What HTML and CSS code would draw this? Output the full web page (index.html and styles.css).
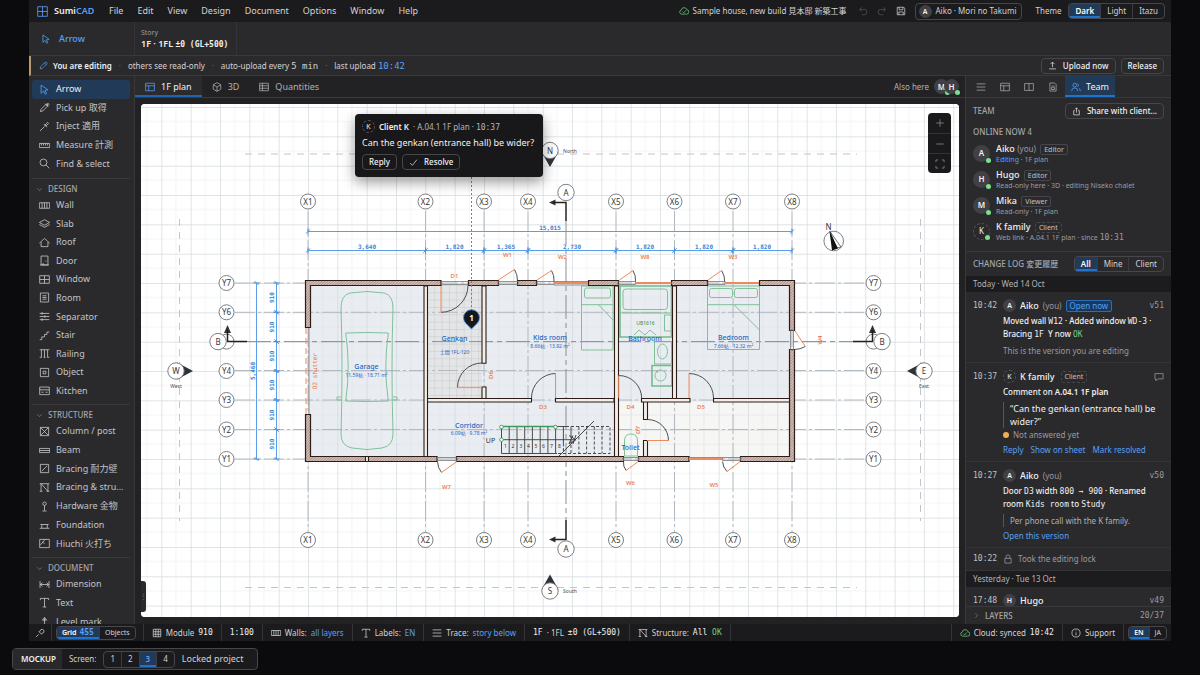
FILE: index.html
```html
<!DOCTYPE html>
<html lang="en">
<head>
<meta charset="utf-8">
<title>SumiCAD</title>
<link rel="stylesheet" href="styles.css">
</head>
<body>
<svg class="defs" aria-hidden="true">
  <symbol id="i-logo" viewBox="0 0 16 16"><path d="M1 1h14v14H1zM8 1v14M1 8h14"/></symbol>
  <symbol id="i-arrow" viewBox="0 0 16 16"><path d="M3 1.500l10 7-4.500.800 2.500 4.500-2 1-2.500-4.500L3 13.500z"/></symbol>
  <symbol id="i-pen" viewBox="0 0 16 16"><path d="M2 14l1-4 8-8q1.500-.500 2.500.500t.500 2.500l-8 8zM9.500 3.500l3 3"/></symbol>
  <symbol id="i-pick" viewBox="0 0 16 16"><path d="M2 14l1-3.500 7-7 2.500 2.500-7 7zM9 2.500l4.500 4.500M11.500 4.500l2-2"/><path class="solid" d="M10.500 3.500l2-2 2 2-2 2z"/></symbol>
  <symbol id="i-inject" viewBox="0 0 16 16"><path d="M1.500 14.500L8 8M7 4.500l4.500 4.500"/><path class="solid" d="M8.500 6l4-4 1.500 1.500-4 4z"/></symbol>
  <symbol id="i-measure" viewBox="0 0 16 16"><path d="M.500 5h15v6H.500zM3.500 5v3M6.500 5v3M9.500 5v3M12.500 5v3"/></symbol>
  <symbol id="i-find" viewBox="0 0 16 16"><circle cx="6.500" cy="6.500" r="5"/><path d="M10 10l5 5"/></symbol>
  <symbol id="i-chev" viewBox="0 0 16 16"><path d="M3 5.500l5 5 5-5"/></symbol>
  <symbol id="i-chevr" viewBox="0 0 16 16"><path d="M5.500 3l5 5-5 5"/></symbol>
  <symbol id="i-wall" viewBox="0 0 16 16"><path d="M.500 4h15v8H.500zM4.500 4v8M8 4v8M11.500 4v8"/></symbol>
  <symbol id="i-slab" viewBox="0 0 16 16"><path d="M8 2.500l7.500 4L8 10.500.500 6.500zM.500 9.500l7.500 4 7.500-4"/></symbol>
  <symbol id="i-roof" viewBox="0 0 16 16"><path d="M.500 9L8 2l7.500 7M3 7.500V14h10V7.500"/></symbol>
  <symbol id="i-door" viewBox="0 0 16 16"><path d="M3 1.500h10v13H3zM1.500 14.500h13M10 8v1.500M6 14.500v-3"/></symbol>
  <symbol id="i-window" viewBox="0 0 16 16"><path d="M1 2.500h14v11H1zM8 2.500v11M1 8h14"/></symbol>
  <symbol id="i-room" viewBox="0 0 16 16"><path d="M2 1.500h12v13H2zM5 5.500h6M5 8h6M5 10.500h6"/></symbol>
  <symbol id="i-sep" viewBox="0 0 16 16"><path d="M1 3.500h14M1 8h14M1 12.500h14M4.500 1.500v4M8.500 6v4M4.500 10.500v4"/></symbol>
  <symbol id="i-stair" viewBox="0 0 16 16"><path d="M1 14h3v-4h4V6.500h3.500V3H15"/></symbol>
  <symbol id="i-rail" viewBox="0 0 16 16"><path d="M1 2.500h14M1 13.500h3M6.500 13.500h3M12 13.500h3M3.500 2.500v11M8 2.500v11M12.500 2.500v11"/></symbol>
  <symbol id="i-object" viewBox="0 0 16 16"><path d="M2 2h12v12H2zM6 6h4v4H6z"/></symbol>
  <symbol id="i-kitchen" viewBox="0 0 16 16"><path d="M1 3h14v11H1zM1 7h14M3.500 10.500h3M9.500 10.500h3"/></symbol>
  <symbol id="i-column" viewBox="0 0 16 16"><path d="M2 2h12v12H2zM2 2l12 12M14 2L2 14"/></symbol>
  <symbol id="i-beam" viewBox="0 0 16 16"><path d="M.500 5h15v6H.500zM.500 8h15"/></symbol>
  <symbol id="i-brace" viewBox="0 0 16 16"><path d="M2 2h12v12H2zM4 12l8-8"/></symbol>
  <symbol id="i-brace2" viewBox="0 0 16 16"><path d="M3 2.500v11M13 2.500v11M1 2.500h14M1 13.500h4M11 13.500h4M3 2.500l10 11"/></symbol>
  <symbol id="i-hard" viewBox="0 0 16 16"><circle cx="8" cy="4" r="2.500"/><path d="M8 6.500V14M5 14.500h6"/></symbol>
  <symbol id="i-found" viewBox="0 0 16 16"><path d="M1 13.500h14M4 13.500V8M12 13.500V8M2 8h12"/></symbol>
  <symbol id="i-hiuchi" viewBox="0 0 16 16"><path d="M1 2h14v12H1zM2 10l7-8M5 6l3 2"/></symbol>
  <symbol id="i-dim" viewBox="0 0 16 16"><path d="M1.500 3v10M14.500 3v10M1.500 8h13M5 5.500L2 8l3 2.500M11 5.500L14 8l-3 2.500"/></symbol>
  <symbol id="i-text" viewBox="0 0 16 16"><path d="M2 4.500V2h12v2.500M8 2v12.500M5.500 14.500h5"/></symbol>
  <symbol id="i-level" viewBox="0 0 16 16"><path d="M8 15V3M5 6l3-4 3 4zM3 15h10"/></symbol>
  <symbol id="i-plan" viewBox="0 0 16 16"><path d="M1 2h14v12H1zM1 6h14M6 6v8"/></symbol>
  <symbol id="i-cube" viewBox="0 0 16 16"><path d="M8 1l6 3.500v7L8 15l-6-3.500v-7zM2 4.500L8 8l6-3.500M8 8v7"/></symbol>
  <symbol id="i-table" viewBox="0 0 16 16"><path d="M1 2h14v12H1zM1 6h14M1 10h14M5.500 2v12"/></symbol>
  <symbol id="i-cloud" viewBox="0 0 16 16"><path d="M4 13a3.300 3.300 0 0 1-.300-6.500 4.500 4.500 0 0 1 8.800-.500A3.500 3.500 0 0 1 12 13zM5.500 9l2 2 3.500-4"/></symbol>
  <symbol id="i-undo" viewBox="0 0 16 16"><path d="M6 2L2.500 5.500 6 9M2.500 5.500H10a4 4 0 0 1 0 8.500H6"/></symbol>
  <symbol id="i-redo" viewBox="0 0 16 16"><path d="M10 2l3.500 3.500L10 9M13.500 5.500H6A4 4 0 0 0 6 14h4"/></symbol>
  <symbol id="i-save" viewBox="0 0 16 16"><path d="M2 2h10.500L14 3.500V14H2zM5 2v4h6V2M4.500 14V9.500h7V14"/></symbol>
  <symbol id="i-upload" viewBox="0 0 16 16"><path d="M8 11V2M4.500 5.500L8 2l3.500 3.500M2 14h12"/></symbol>
  <symbol id="i-share" viewBox="0 0 16 16"><path d="M8 10V1.500M5.500 4L8 1.500 10.500 4M5 6.500H3V14h10V6.500h-2"/></symbol>
  <symbol id="i-menu" viewBox="0 0 16 16"><path d="M1 3h14M1 8h14M1 13h14"/></symbol>
  <symbol id="i-book" viewBox="0 0 16 16"><path d="M1 2.500h14v11H1zM8 2.500v11"/></symbol>
  <symbol id="i-doc" viewBox="0 0 16 16"><path d="M3 1.500h7.500L13 4v10.500H3zM5.500 6.500h5M5.500 9h5v3h-5z"/></symbol>
  <symbol id="i-team" viewBox="0 0 16 16"><circle cx="6" cy="5" r="3"/><path d="M1 14.500q0-5 5-5t5 5M10.500 2.500a3 3 0 0 1 0 5M12.500 10q2.500 1 2.500 4.500"/></symbol>
  <symbol id="i-chat" viewBox="0 0 16 16"><path d="M1.500 2.500h13V11H6l-3 3v-3H1.500z"/></symbol>
  <symbol id="i-lock" viewBox="0 0 16 16"><path d="M3 7h10v7.500H3zM5 7V4.500a3 3 0 0 1 6 0V7"/></symbol>
  <symbol id="i-info" viewBox="0 0 16 16"><circle cx="8" cy="8" r="6.500"/><path d="M8 7v5M8 4v1.200"/></symbol>
  <symbol id="i-pin" viewBox="0 0 16 16"><path d="M1.500 14.500L6 10M6 5.500l4.500 4.500M7 6.500l2.500-4q2.500-1 4 .500t.500 4l-4 2.500"/></symbol>
  <symbol id="i-check" viewBox="0 0 16 16"><path d="M2 9l4 4 8-10"/></symbol>
  <symbol id="i-grid" viewBox="0 0 16 16"><path d="M2 2h12v12H2zM6 2v12M10 2v12M2 6h12M2 10h12"/></symbol>
  <symbol id="i-plus" viewBox="0 0 16 16"><path d="M8 2v12M2 8h12"/></symbol>
  <symbol id="i-minus" viewBox="0 0 16 16"><path d="M2 8h12"/></symbol>
  <symbol id="i-fit" viewBox="0 0 16 16"><path d="M1.500 5V1.500H5M11 1.500h3.500V5M14.500 11v3.500H11M5 14.500H1.500V11"/></symbol>
</svg>

<div class="app">
  <header class="titlebar">
    <div class="brand"><svg class="icon blue"><use href="#i-logo"/></svg><strong>Sumi<span>CAD</span></strong></div>
    <nav class="menus">
      <button>File</button><button>Edit</button><button>View</button><button>Design</button><button>Document</button><button>Options</button><button>Window</button><button>Help</button>
    </nav>
    <div class="project"><svg class="icon green"><use href="#i-cloud"/></svg><span>Sample house, new build 見本邸 新築工事</span></div>
    <div class="quick">
      <button class="dim" aria-label="Undo"><svg class="icon"><use href="#i-undo"/></svg></button>
      <button class="dim" aria-label="Redo"><svg class="icon"><use href="#i-redo"/></svg></button>
      <button aria-label="Save"><svg class="icon"><use href="#i-save"/></svg></button>
    </div>
    <button class="btn account"><span class="avatar small">A</span>Aiko · Mori no Takumi</button>
    <span class="theme-label">Theme</span>
    <div class="seg theme"><button class="on">Dark</button><button>Light</button><button>Itazu</button></div>
  </header>

  <div class="optionbar">
    <div class="current"><svg class="icon blue"><use href="#i-arrow"/></svg>Arrow</div>
    <div class="story"><span>Story</span><b>1F · 1FL <code>±0 (GL+500)</code></b></div>
  </div>

  <div class="lockbar">
    <svg class="icon blue"><use href="#i-pen"/></svg>
    <strong>You are editing</strong><i>·</i><span>others see read-only</span><i>·</i><span>auto-upload every <code>5 min</code></span><i>·</i><span>last upload <code class="blue">10:42</code></span>
    <button class="btn push"><svg class="icon"><use href="#i-upload"/></svg>Upload now</button>
    <button class="btn">Release</button>
  </div>

  <main class="work">
    <aside class="tools">
      <div class="tool-list basic">
        <button class="on"><svg class="icon"><use href="#i-arrow"/></svg>Arrow</button>
        <button><svg class="icon"><use href="#i-pick"/></svg>Pick up 取得</button>
        <button><svg class="icon"><use href="#i-inject"/></svg>Inject 適用</button>
        <button><svg class="icon"><use href="#i-measure"/></svg>Measure 計測</button>
        <button><svg class="icon"><use href="#i-find"/></svg>Find &amp; select</button>
      </div>
      <h2><svg class="icon tiny"><use href="#i-chev"/></svg>DESIGN</h2>
      <div class="tool-list design">
        <button><svg class="icon"><use href="#i-wall"/></svg>Wall</button>
        <button><svg class="icon"><use href="#i-slab"/></svg>Slab</button>
        <button><svg class="icon"><use href="#i-roof"/></svg>Roof</button>
        <button><svg class="icon"><use href="#i-door"/></svg>Door</button>
        <button><svg class="icon"><use href="#i-window"/></svg>Window</button>
        <button><svg class="icon"><use href="#i-room"/></svg>Room</button>
        <button><svg class="icon"><use href="#i-sep"/></svg>Separator</button>
        <button><svg class="icon"><use href="#i-stair"/></svg>Stair</button>
        <button><svg class="icon"><use href="#i-rail"/></svg>Railing</button>
        <button><svg class="icon"><use href="#i-object"/></svg>Object</button>
        <button><svg class="icon"><use href="#i-kitchen"/></svg>Kitchen</button>
      </div>
      <h2><svg class="icon tiny"><use href="#i-chev"/></svg>STRUCTURE</h2>
      <div class="tool-list structure">
        <button><svg class="icon"><use href="#i-column"/></svg>Column / post</button>
        <button><svg class="icon"><use href="#i-beam"/></svg>Beam</button>
        <button><svg class="icon"><use href="#i-brace"/></svg>Bracing 耐力壁</button>
        <button><svg class="icon"><use href="#i-brace2"/></svg>Bracing &amp; stru...</button>
        <button><svg class="icon"><use href="#i-hard"/></svg>Hardware 金物</button>
        <button><svg class="icon"><use href="#i-found"/></svg>Foundation</button>
        <button><svg class="icon"><use href="#i-hiuchi"/></svg>Hiuchi 火打ち</button>
      </div>
      <h2><svg class="icon tiny"><use href="#i-chev"/></svg>DOCUMENT</h2>
      <div class="tool-list document">
        <button><svg class="icon"><use href="#i-dim"/></svg>Dimension</button>
        <button><svg class="icon"><use href="#i-text"/></svg>Text</button>
        <button><svg class="icon"><use href="#i-level"/></svg>Level mark</button>
      </div>
    </aside>

    <section class="stage">
      <div class="tabs">
        <button class="on"><svg class="icon blue"><use href="#i-plan"/></svg>1F plan</button>
        <button><svg class="icon"><use href="#i-cube"/></svg>3D</button>
        <button><svg class="icon"><use href="#i-table"/></svg>Quantities</button>
        <div class="here">Also here <span class="faces"><span class="avatar online">M</span><span class="avatar online">H</span></span></div>
      </div>
      <div class="canvas">
        <svg class="plan" viewBox="141 104 818 513" role="img" aria-label="First floor plan">
          <defs>
            <pattern id="grid" x="308" y="283" width="29.330" height="29.330" patternUnits="userSpaceOnUse">
              <path d="M14.660 0v29.330M0 14.660h29.330" stroke="#f0f1f3" stroke-width=".8"/>
              <path d="M0 0v29.330M0 0h29.330" stroke="#d3dade" stroke-width="1.400"/>
            </pattern>
            <pattern id="room" x="308" y="283" width="29.330" height="29.330" patternUnits="userSpaceOnUse">
              <path d="M14.660 0v29.330M0 14.660h29.330" stroke="#dfe3e8" stroke-width=".8"/>
              <path d="M0 0v29.330M0 0h29.330" stroke="#c9d1d8" stroke-width="1.400"/>
            </pattern>
            <pattern id="tile" x="427" y="285" width="7.330" height="7.330" patternUnits="userSpaceOnUse">
              <path d="M0 0v7.330M0 0h7.330" stroke="#c2c5c8" stroke-width=".9"/>
            </pattern>
            <pattern id="hatch" width="2" height="2" patternUnits="userSpaceOnUse" patternTransform="rotate(45)">
              <rect width="2" height="2" fill="#d9c4be"/><path d="M0 0v2" stroke="#94706a" stroke-width="1.200"/>
            </pattern>
            <marker id="tick" markerWidth="8" markerHeight="8" refX="4" refY="4" orient="auto" markerUnits="userSpaceOnUse"><path d="M2 6l4-4M4 1v6" stroke="#4f93e0" stroke-width="1"/></marker>
          </defs>
          <rect x="141" y="104" width="818" height="513" fill="#fff"/>
          <rect x="141" y="104" width="818" height="513" fill="url(#grid)"/>

          <g class="boundary"><path d="M245 154H857M245 587.500H857M179.500 219V521M920.500 219V521"/></g>

          <rect x="308" y="283" width="484" height="176" fill="#e9edf1"/>
          <rect x="619" y="400" width="171" height="57" fill="#f6f6f4"/>
          <rect x="308" y="283" width="484" height="176" fill="url(#room)" opacity=".8"/>
          <rect x="427" y="285" width="55" height="114" fill="#e4e5e6"/>
          <rect x="427" y="285" width="55" height="114" fill="url(#tile)"/>

          <g class="axis">
            <path d="M308 211V532M425.500 211V532M484 211V532M528 211V532M616 211V532M674.500 211V532M733 211V532M792 211V532"/>
            <path d="M235 283H866M235 312.300H866M235 370.500H866M235 400H866M235 429.500H866M235 459H866"/>
            <path class="section" d="M247 341.600H853M566 221V520"/>
          </g>

          <g class="dims">
            <path d="M308 231.500H792"/>
            <path d="M308 250.500H425.500"/><path d="M425.500 250.500H484"/><path d="M484 250.500H528"/><path d="M528 250.500H616"/><path d="M616 250.500H674.500"/><path d="M674.500 250.500H733"/><path d="M733 250.500H792"/>
            <path d="M256.500 283V459"/>
            <path d="M276.500 283V312.300"/><path d="M276.500 312.300V341.600"/><path d="M276.500 341.600V371"/><path d="M276.500 371V400"/><path d="M276.500 400V429.500"/><path d="M276.500 429.500V459"/>
          </g>
          <g class="dimtext">
            <text x="550" y="229.500">15,015</text>
            <text x="367" y="248.500">3,640</text><text x="454.500" y="248.500">1,820</text><text x="506" y="248.500">1,365</text><text x="572" y="248.500">2,730</text><text x="645" y="248.500">1,820</text><text x="704" y="248.500">1,820</text><text x="762" y="248.500">1,820</text>
            <text transform="translate(255 371) rotate(-90)">5,460</text>
            <text transform="translate(274 297.500) rotate(-90)">910</text><text transform="translate(274 327) rotate(-90)">910</text><text transform="translate(274 356) rotate(-90)">910</text><text transform="translate(274 385) rotate(-90)">910</text><text transform="translate(274 415) rotate(-90)">910</text><text transform="translate(274 444) rotate(-90)">910</text>
          </g>

          <g class="furniture">
            <path d="M341 308q0-13 9-15 17-3 34 0 9 2 9 15-2 60 0 126 0 12-11 14-15 3-30 0-11-2-11-14 2-66 0-126z"/>
            <path d="M345.700 333q21-1 42.600 0-5 34 0 68-21 1-42.600 0 5-34 0-68zM341 397h-4v3h4M393 397h4v3h-4"/>
            <path d="M581.500 286H613v64h-31.500zM581.500 304.700H613M598.500 304.700L613 320"/><rect x="584.500" y="288" width="26" height="10" rx="2"/>
            <path class="thick" d="M620 286h51.500v51H620z"/><path d="M622 313h48M664.500 315h7v16h-7zM634 335l5-5 6 5 5-5 6 5M654.500 341.500h17V364h-17zM624.500 456v-15q0-7 6.500-7t6.500 7v15z"/><rect x="623" y="289" width="44.500" height="20.500" rx="3"/>
            <ellipse cx="662.500" cy="351.500" rx="5" ry="7.500"/><path class="thick" d="M652 365.500h20V386h-20z"/><circle cx="660.500" cy="375.500" r="5.500"/><path d="M656 371l2 2"/>
            <path d="M707.500 286h52v63.500h-52zM707.500 304.700h52M734 304.700L759.500 330"/><rect x="709.500" y="288.500" width="23" height="9" rx="2"/><rect x="734.500" y="288.500" width="23" height="9" rx="2"/>
          </g>

          <g class="stairs">
            <path d="M501.500 426.500H566M501.500 453.500H557M501.500 426.500v27M509.200 426.500v27M517 426.500v27M524.700 426.500v27M532.400 426.500v27M540.200 426.500v27M547.900 426.500v27M555.600 426.500v27M563.400 426.500v20M571 426.500v12M557 458l37-37M501.500 439.700H575M569 435.500l7 4.200-7 4.200M573 435.500l-4 8M576 435l-3 9"/>
            <path stroke-dasharray="3 2" d="M566 426.500H610v27H557M563.400 448v6M571 440v13M578.900 426.500v27M586.600 426.500v27M594.300 426.500v27M602 426.500v27"/>
            <path class="rail" d="M501.500 426.500H556"/>
            <circle cx="501.500" cy="427" r="1.800"/><circle cx="555.500" cy="427" r="1.800"/><circle cx="501.500" cy="439.700" r="1.800"/>
          </g>
          <g class="steps"><text x="505.500" y="448">1</text><text x="513" y="448">2</text><text x="521" y="448">3</text><text x="528.500" y="448">4</text><text x="536" y="448">5</text><text x="543.500" y="448">6</text><text x="551.500" y="448">7</text><text x="559.500" y="448">8</text></g>

          <g class="walls">
            <path d="M305.500 280.500H441V285.500H310.500V327.500H305.500zM468.500 280.500H498.500V285.500H468.500zM517.500 280.500H536.500V285.500H517.500zM588.500 280.500H618.500V285.500H588.500zM671.500 280.500H707.500V285.500H671.500zM759.500 280.500H794.500V330.500H789.500V285.500H759.500zM789.500 349.500H794.500V461.500H740.500V456.500H789.500zM689 456.500V461.500H638.500V456.500zM623.500 456.500V461.500H456.500V456.500zM437 456.500V461.500H305.500V414.500H310.500V456.500z"/>
          </g>
          <g class="walls inner">
            <path d="M424 286h3.500v170.500H424zM482 286h4v77.300h-4zM482 387h4v11.500h-4zM427.500 398.500H531.500v3.500H427.500zM555.500 398.500H614v3.500h-58.500zM614.500 286h4v170.500h-4zM641.500 398.500H690v3.500h-48.500zM713.500 398.500H789.500v3.500h-76zM672.500 286h4v112.500h-4zM643.500 402h4v17.500h-4zM643.500 440.500h4v16h-4zM365.500 456.500h3v5h-3z"/>
          </g>
          <g class="frames"><path d="M441 281.500h27.500M441 284.500h27.500M498 281.500h20v3h-20zM537 281.500h17v3h-17zM554 281.500h34M554 285h34M618 281.500h17.500v3H618zM708 281.500h17v3h-17zM790.500 330v20h3v-20zM437 457.500h20v3h-20zM623.500 457.500h15v3h-15zM722.500 457.500h18v3h-18zM689 457.500h33.500M309 328v86"/></g>
          <g class="swing"><path d="M441 312.300A27 27 0 0 0 468 285.500M482 363a24.500 24.500 0 0 0-24.500 24.500M531.500 398a24.500 24.500 0 0 1 24-24.500M618.700 375.500a23 23 0 0 1 23 23M647.500 419.500a21 21 0 0 1 21 21M689 373.500a24.500 24.500 0 0 1 24.500 24.500M514.500 269.500q3 5 3 11M551.500 270.500q3 5 2.500 11M633 270.500q3 5 2.500 11M721.700 270.500q3 5 3 11M805.300 346.500q-5 3-11 3M441.500 472.500q-4-5-4-11M626 470.500q-3-4-2.500-9M727 471.500q-4-4-4.500-10"/></g>
          <g class="leaf"><path d="M441 286v26.500M457.500 387.300H482M555.500 373.500V398M618.700 375.500V398M647 440.500h21.500M689 373.500V398M498.300 280l16.200-10.500M537 280l14.500-9.500M619.500 280l13.500-9.500M708 280l13.700-9.500M795 331l10.300 15.500M456.700 461.700l-15.200 10.800M638 461.700l-12 8.800M740 461.700l-13 9.800"/><path class="sash" d="M554 283h34M635.500 283h36M725 283h34M689 459h33.500"/><path stroke-dasharray="6 4" d="M306 328v86"/></g>

          <g class="tag">
            <text x="454.500" y="277.500">D1</text><text x="507.500" y="257">W1</text><text x="562.500" y="259">W2</text><text x="645" y="259">W8</text><text x="733" y="259">W3</text><text x="543" y="409">D3</text><text x="630.500" y="409">D4</text><text x="701" y="409">D5</text><text x="446.500" y="489">W7</text><text x="630.500" y="484.500">W6</text><text x="714" y="487">W5</text>
            <text transform="translate(493 375) rotate(-90)">D6</text><text transform="translate(640 430) rotate(-90)">D7</text><text transform="translate(822 340) rotate(-90)">W4</text>
            <text class="shutter" transform="translate(317 371) rotate(-90)">D2 shutter</text>
          </g>
          <g class="rooms">
            <text x="366.500" y="369">Garage</text><text x="454.500" y="340.500">Genkan</text><text x="550" y="340">Kids room</text><text x="645" y="340.500">Bathroom</text><text x="733.500" y="340">Bedroom</text><text x="469" y="427.500">Corridor</text><text x="630.500" y="450">Toilet</text>
            <g class="area"><text x="366.500" y="376.500">11.59帖 · 18.71 m²</text><text class="mini" x="454.500" y="354">土間 1FL-120</text><text x="550" y="347.500">8.66帖 · 13.92 m²</text><text x="733.500" y="347.500">7.66帖 · 12.32 m²</text><text x="469" y="435">6.09帖 · 9.78 m²</text></g>
          </g>
          <text class="fix" x="645.500" y="324.500">UB1616</text>
          <text class="up" x="490.500" y="442.500">UP</text>

          <g class="bubbles">
            <circle cx="308" cy="201.500" r="7.500"/><circle cx="425.500" cy="201.500" r="7.500"/><circle cx="484" cy="201.500" r="7.500"/><circle cx="528" cy="201.500" r="7.500"/><circle cx="616" cy="201.500" r="7.500"/><circle cx="674.500" cy="201.500" r="7.500"/><circle cx="733" cy="201.500" r="7.500"/><circle cx="792" cy="201.500" r="7.500"/>
            <circle cx="308" cy="540" r="7.500"/><circle cx="425.500" cy="540" r="7.500"/><circle cx="484" cy="540" r="7.500"/><circle cx="528" cy="540" r="7.500"/><circle cx="616" cy="540" r="7.500"/><circle cx="674.500" cy="540" r="7.500"/><circle cx="733" cy="540" r="7.500"/><circle cx="792" cy="540" r="7.500"/>
            <circle cx="226.500" cy="283" r="7.500"/><circle cx="226.500" cy="312.300" r="7.500"/><circle cx="226.500" cy="341.600" r="7.500"/><circle cx="226.500" cy="371" r="7.500"/><circle cx="226.500" cy="400" r="7.500"/><circle cx="226.500" cy="429.500" r="7.500"/><circle cx="226.500" cy="459" r="7.500"/>
            <circle cx="873.500" cy="283" r="7.500"/><circle cx="873.500" cy="312.300" r="7.500"/><circle cx="873.500" cy="341.600" r="7.500"/><circle cx="873.500" cy="371" r="7.500"/><circle cx="873.500" cy="400" r="7.500"/><circle cx="873.500" cy="429.500" r="7.500"/><circle cx="873.500" cy="459" r="7.500"/>
            <text x="308" y="204.500">X1</text><text x="425.500" y="204.500">X2</text><text x="484" y="204.500">X3</text><text x="528" y="204.500">X4</text><text x="616" y="204.500">X5</text><text x="674.500" y="204.500">X6</text><text x="733" y="204.500">X7</text><text x="792" y="204.500">X8</text>
            <text x="308" y="543">X1</text><text x="425.500" y="543">X2</text><text x="484" y="543">X3</text><text x="528" y="543">X4</text><text x="616" y="543">X5</text><text x="674.500" y="543">X6</text><text x="733" y="543">X7</text><text x="792" y="543">X8</text>
            <text x="226.500" y="286">Y7</text><text x="226.500" y="315.300">Y6</text><text x="226.500" y="374">Y4</text><text x="226.500" y="403">Y3</text><text x="226.500" y="432.500">Y2</text><text x="226.500" y="462">Y1</text>
            <text x="873.500" y="286">Y7</text><text x="873.500" y="315.300">Y6</text><text x="873.500" y="374">Y4</text><text x="873.500" y="403">Y3</text><text x="873.500" y="432.500">Y2</text><text x="873.500" y="462">Y1</text>
            <g class="solidmarks">
              <path d="M541.500 152h17L550 167zM541.500 589.500h17L550 574.500zM177 362.500v17l16-8.500zM923 362.500v17L907 371z"/>
              <path d="M549 202.500l6.500-3v6zM549 539.500l6.500-3v6zM227.500 325l-3.500 8h7zM872.500 325l-3.500 8h7z"/>
            </g>
            <path class="cut" d="M553 202.500h13V221M566 520v19.500h-13M227.500 330v11.600H247M853 341.600h19.500V330"/>
            <circle cx="566" cy="192.500" r="8.200"/><circle cx="566" cy="549" r="8.200"/><circle cx="218" cy="341.600" r="8.200"/><circle cx="882" cy="341.600" r="8.200"/>
            <circle cx="550" cy="150.500" r="8.200"/><circle cx="550" cy="591" r="8.200"/><circle cx="176" cy="371" r="8.200"/><circle cx="924" cy="371" r="8.200"/>
            <text x="566" y="195.500">A</text><text x="566" y="552">A</text><text x="218" y="344.600">B</text><text x="882" y="344.600">B</text><text x="550" y="153.500">N</text><text x="550" y="594">S</text><text x="176" y="374">W</text><text x="924" y="374">E</text>
            <circle cx="833.700" cy="241" r="9.800"/><path fill="#fff" stroke="#333" stroke-width=".7" d="M830 231.500l11 15.500-4.500 1z"/><path fill="#111" d="M829.500 231l2.500 19.500 6-2z"/>
            <text x="828.500" y="230">N</text>
          </g>
          <g class="compass"><text x="570" y="153">North</text><text x="570" y="593">South</text><text x="176" y="387.500">West</text><text x="924" y="387.500">East</text></g>

          <path class="leader" d="M471.500 177V312"/>
          <path d="M471.500 329l-5.500-5.500a8 8 0 1 1 11 0z" fill="#15171a" stroke="#4096ff" stroke-width=".9"/>
          <text class="pin" x="471.500" y="321">1</text>
        </svg>

        <article class="note">
          <header><span class="avatar small client">K</span><b>Client K</b><span>· A.04.1 1F plan · <code>10:37</code></span></header>
          <p>Can the genkan (entrance hall) be wider?</p>
          <div class="actions"><button class="btn">Reply</button><button class="btn"><svg class="icon"><use href="#i-check"/></svg>Resolve</button></div>
        </article>
        <div class="zoom">
          <button aria-label="Zoom in"><svg class="icon"><use href="#i-plus"/></svg></button>
          <button aria-label="Zoom out"><svg class="icon"><use href="#i-minus"/></svg></button>
          <button aria-label="Fit"><svg class="icon"><use href="#i-fit"/></svg></button>
        </div>
        <button class="handle" aria-label="Collapse tools">⋮</button>
      </div>
    </section>

    <aside class="panel">
      <div class="ptabs">
        <button aria-label="List"><svg class="icon"><use href="#i-menu"/></svg></button>
        <button aria-label="Layout"><svg class="icon"><use href="#i-plan"/></svg></button>
        <button aria-label="Views"><svg class="icon"><use href="#i-book"/></svg></button>
        <button aria-label="Sheets"><svg class="icon"><use href="#i-doc"/></svg></button>
        <button class="on"><svg class="icon blue"><use href="#i-team"/></svg>Team</button>
      </div>
      <div class="team-head"><h2>TEAM</h2><button class="btn"><svg class="icon"><use href="#i-share"/></svg>Share with client...</button></div>
      <h2 class="online-head">ONLINE NOW <code>4</code></h2>
      <ul class="people">
        <li><span class="avatar big online">A</span><div><p><b>Aiko</b> <span>(you)</span> <em>Editor</em></p><small><span class="blue">Editing</span> · 1F plan</small></div></li>
        <li><span class="avatar big online">H</span><div><p><b>Hugo</b> <em>Editor</em></p><small>Read-only here · 3D · editing Niseko chalet</small></div></li>
        <li><span class="avatar big online">M</span><div><p><b>Mika</b> <em>Viewer</em></p><small>Read-only · 1F plan</small></div></li>
        <li><span class="avatar big online client">K</span><div><p><b>K family</b> <em class="client">Client</em></p><small>Web link · A.04.1 1F plan · since <code>10:31</code></small></div></li>
      </ul>
      <div class="log-head"><h2>CHANGE LOG 変更履歴</h2><div class="seg"><button class="on">All</button><button>Mine</button><button>Client</button></div></div>
      <div class="log">
        <div class="day">Today · Wed 14 Oct</div>
        <article class="entry">
          <code class="time">10:42</code>
          <div><header><span class="avatar small">A</span><b>Aiko</b><span>(you)</span><em class="open">Open now</em><code class="ver">v51</code></header>
          <p>Moved wall <code>W12</code> · Added window <code>WD-3</code> · Bracing <code>1F</code>&nbsp; Y now <code class="ok">OK</code></p>
          <p class="muted">This is the version you are editing</p></div>
        </article>
        <article class="entry">
          <code class="time">10:37</code>
          <div><header><span class="avatar small client">K</span><b>K family</b><em class="client">Client</em><svg class="icon ver"><use href="#i-chat"/></svg></header>
          <p>Comment on <b>A.04.1 1F plan</b></p>
          <blockquote>“Can the genkan (entrance hall) be wider?”</blockquote>
          <p class="pending">Not answered yet</p>
          <nav><a href="#">Reply</a><a href="#">Show on sheet</a><a href="#">Mark resolved</a></nav></div>
        </article>
        <article class="entry">
          <code class="time">10:27</code>
          <div><header><span class="avatar small">A</span><b>Aiko</b><span>(you)</span><code class="ver">v50</code></header>
          <p>Door <code>D3</code> width <code>800 → 900</code> · Renamed room <code>Kids room</code> to <code>Study</code></p>
          <blockquote class="quiet">Per phone call with the K family.</blockquote>
          <nav><a href="#">Open this version</a></nav></div>
        </article>
        <article class="entry slim">
          <code class="time">10:22</code>
          <div class="event"><svg class="icon"><use href="#i-lock"/></svg>Took the editing lock</div>
        </article>
        <div class="day">Yesterday · Tue 13 Oct</div>
        <article class="entry last">
          <code class="time">17:48</code>
          <div><header><span class="avatar small">H</span><b>Hugo</b><code class="ver">v49</code></header></div>
        </article>
      </div>
      <div class="layers"><svg class="icon tiny"><use href="#i-chevr"/></svg><h2>LAYERS</h2><code>20/37</code></div>
    </aside>
  </main>

  <footer class="status">
    <div class="pinned"><svg class="icon"><use href="#i-pin"/></svg></div>
    <div class="modes"><div class="seg"><button class="on">Grid <code class="blue">455</code></button><button>Objects</button></div></div>
    <div><svg class="icon"><use href="#i-grid"/></svg>Module <code>910</code></div>
    <div><code>1:100</code></div>
    <div><svg class="icon"><use href="#i-wall"/></svg>Walls: <span class="blue">all layers</span></div>
    <div><svg class="icon"><use href="#i-text"/></svg>Labels: <span class="blue">EN</span></div>
    <div><svg class="icon"><use href="#i-menu"/></svg>Trace: <span class="blue">story below</span></div>
    <div><code>1F</code> · 1FL <code>±0 (GL+500)</code></div>
    <div><svg class="icon"><use href="#i-brace2"/></svg>Structure: <code>All <span class="ok">OK</span></code></div>
    <div class="sync"><svg class="icon green"><use href="#i-cloud"/></svg>Cloud: synced <code>10:42</code></div>
    <div><svg class="icon"><use href="#i-info"/></svg>Support</div>
    <div class="langs"><div class="seg"><button class="on">EN</button><button>JA</button></div></div>
  </footer>
</div>

<div class="mockup">
  <strong>MOCKUP</strong><span>Screen:</span>
  <div class="seg"><button>1</button><button>2</button><button class="on">3</button><button>4</button></div>
  <span class="state">Locked project</span>
</div>
</body>
</html>
```
FILE: styles.css
```css
* { box-sizing: border-box; }
:root {
  --bg: #0b0b0d;
  --bar: #1b1b1d;
  --stage: #222225;
  --panel: #2a2a2d;
  --line: #39393d;
  --text: #d2d2d4;
  --muted: #9b9ba0;
  --strong: #f0f0f2;
  --blue: #58a0f5;
  --green: #6fce82;
  --active: #213a57;
  --sans: "Noto Sans", "Noto Sans CJK JP", sans-serif;
  --mono: "DejaVu Sans Mono", monospace;
}
body {
  margin: 0;
  height: 100vh;
  display: flex;
  flex-direction: column;
  overflow: hidden;
  background: var(--bg);
  color: var(--text);
  font: 9px/12px var(--sans);
}
button { font: inherit; color: inherit; background: none; border: 0; margin: 0; padding: 0; display: inline-flex; align-items: center; white-space: nowrap; }
h2, p, ul, blockquote { margin: 0; padding: 0; }
ul { list-style: none; }
em, i { font-style: normal; }
a { color: var(--blue); text-decoration: none; }
code { font-family: var(--mono); font-size: 8px; line-height: 1; }
b, strong { color: var(--strong); font-weight: 600; }
h2 { font-size: 8px; font-weight: 600; line-height: 12px; color: #a5a5a9; }
.defs { position: absolute; width: 0; height: 0; }
.icon { width: 10px; height: 10px; flex: none; fill: none; stroke: currentColor; stroke-width: 1.2; }
.icon .solid { fill: currentColor; }
.icon.tiny { width: 7px; height: 7px; }
.blue { color: var(--blue); }
.green, .ok { color: var(--green); }

.btn { height: 16px; padding: 0 6px; gap: 6px; border: 1px solid #47474b; border-radius: 4px; color: var(--strong); font-size: 8px; font-weight: 500; }
.btn .icon { width: 9px; height: 9px; }
.seg { display: inline-flex; border: 1px solid #47474b; border-radius: 4px; overflow: hidden; font-size: 8px; }
.seg button { padding: 0 5px; height: 14px; }
.seg button + button { border-left: 1px solid #3c3c40; }
.seg .on { background: var(--active); color: #fff; font-weight: 600; box-shadow: inset 0 -2px #1f73cf; }
.avatar { width: 15px; height: 15px; flex: none; border-radius: 50%; background: #414145; color: var(--strong); font-size: 8px; line-height: 1; font-weight: 600; display: inline-flex; align-items: center; justify-content: center; position: relative; }
.avatar.small { width: 13px; height: 13px; font-size: 7px; }
.avatar.big { width: 17px; height: 17px; }
.avatar.client { background: none; border: 1px dashed #55555a; font-weight: 400; }
.avatar.online::after { content: ""; position: absolute; right: -1px; bottom: -1px; width: 5px; height: 5px; border-radius: 50%; background: #7be08e; }

.app { flex: 1; min-height: 0; margin: 0 29px; display: flex; flex-direction: column; background: var(--panel); }
.titlebar { height: 22px; flex: none; display: flex; align-items: center; background: var(--bar); padding: 0 6px 0 8px; }
.brand { display: flex; align-items: center; gap: 6px; width: 72px; }
.brand .icon { width: 11px; height: 11px; }
.brand strong span { color: var(--blue); }
.menus { display: flex; gap: 14px; margin-right: auto; }
.project { display: flex; align-items: center; gap: 4px; font-size: 8px; }
.quick { display: flex; gap: 9px; margin: 0 9px 0 11px; }
.quick .dim { color: #535357; }
.account { height: 17px; gap: 4px; padding: 0 4px 0 3px; margin-right: 14px; color: var(--text); font-weight: 400; }
.theme-label { font-size: 8px; }
.theme { margin-left: 7px; }
.theme button { height: 14px; padding: 0 6px; }

.optionbar { height: 34px; flex: none; display: flex; border-bottom: 1px solid var(--line); }
.current { width: 106px; display: flex; align-items: center; gap: 8px; padding-left: 12px; color: var(--blue); font-weight: 500; border-right: 1px solid #343438; }
.story { display: flex; flex-direction: column; justify-content: center; padding: 0 8px 0 6px; border-right: 1px solid #343438; }
.story span { font-size: 7px; line-height: 10px; color: var(--muted); }

.lockbar { height: 20px; flex: none; display: flex; align-items: center; padding: 0 7px 0 8px; border-left: 2px solid #b89a6d; border-bottom: 1px solid var(--line); font-size: 8px; }
.lockbar .icon { margin-right: 5px; width: 9px; height: 9px; }
.lockbar code { font-size: 9px; }
.lockbar i { width: 16px; text-align: center; color: #66666a; }
.lockbar .push { margin-left: auto; margin-right: 5px; }
.lockbar .btn .icon { margin: 0; }

.work { flex: 1; min-height: 0; display: grid; grid-template-columns: 106px minmax(0, 1fr) 206px; grid-template-rows: minmax(0, 1fr); }
.tools { overflow: hidden; padding: 4px 4px 0 3px; border-right: 1px solid #38383c; }
.tool-list { display: grid; grid-auto-rows: 1fr; padding: 0; }
.tool-list.basic { min-height: 93px; margin-bottom: 5px; }
.tool-list.design { min-height: 204px; margin-bottom: 4px; }
.tool-list.structure { min-height: 131px; margin-bottom: 4px; }
.tool-list.document { min-height: 56px; }
.tool-list .icon { width: 11px; height: 11px; }
.tool-list button { gap: 6px; padding: 0 7px; border-radius: 3px; min-height: 0; color: #c3c3c6; }
.tool-list .on { background: var(--active); color: var(--strong); }
.tool-list .on .icon { color: var(--blue); }
.tools h2 { display: flex; align-items: center; gap: 5px; padding: 4px 0 1px 4px; border-top: 1px solid var(--line); font-weight: 500; }

.stage { display: flex; flex-direction: column; min-width: 0; background: var(--stage); }
.tabs { height: 22px; flex: none; display: flex; border-bottom: 1px solid var(--line); color: #b0b0b4; }
.tabs button { padding: 0 10px; gap: 6px; }
.tabs .on { background: #2b2b2e; color: var(--strong); box-shadow: inset 0 -2px #1d64b3; }
.here { margin-left: auto; display: flex; align-items: center; gap: 5px; padding-right: 6px; font-size: 8px; }
.faces { display: flex; }
.faces .avatar + .avatar { margin-left: -5px; }
.canvas { flex: 1; min-height: 0; margin: 6px 6px 7px 6px; position: relative; border-radius: 4px; background: #fff; }
.plan { display: block; width: 100%; height: 100%; border-radius: 4px; }
.note { position: absolute; left: 214px; top: 10px; width: 188px; padding: 6px 7px 7px; border-radius: 4px; background: #18181a; color: var(--strong); box-shadow: 0 5px 14px #0006; font-size: 8px; }
.note header { display: flex; align-items: center; gap: 4px; color: #b5b5b9; }
.note p { margin: 4px 0 5px; font-size: 9px; }
.actions { display: flex; gap: 5px; }
.zoom { position: absolute; right: 8px; top: 9px; width: 23px; background: #1a1a1c; border-radius: 4px; display: grid; color: #8f8f93; }
.zoom button { height: 20px; justify-content: center; }
.zoom button + button { border-top: 1px solid #333337; }
.handle { position: absolute; left: 0; bottom: 5px; width: 5px; height: 31px; background: #29292c; border-radius: 0 3px 3px 0; font-size: 7px; color: #77777b; justify-content: center; }

.plan text { font-family: var(--sans); text-anchor: middle; }
.boundary path { fill: none; stroke: #c4c4c6; stroke-width: 1; stroke-dasharray: 7 6; }
.axis path { fill: none; stroke: #b4bac1; stroke-width: 1; stroke-dasharray: 20 3 3 3; }
.axis .section { stroke: #8a8d92; stroke-dasharray: 24 4 5 4; }
.dims path { stroke: #5b9de6; stroke-width: 1; marker-start: url(#tick); marker-end: url(#tick); }
.plan .dimtext text { fill: #3d83d6; font: 600 6px var(--mono); }
.furniture { fill: none; stroke: #74bb8d; stroke-width: .9; }
.furniture .thick { stroke-width: 1.6; }
.stairs { fill: none; stroke: #3a3a3a; stroke-width: .9; }
.stairs .rail { stroke: #3f9a5f; stroke-width: 1.4; }
.stairs circle { fill: #fff; stroke: #3f9a5f; }
.plan .steps text { font-size: 5px; fill: #333; }
.walls path { fill: url(#hatch); stroke: #2b1c18; stroke-width: 1.2; }
.walls.inner path { fill: #f3efe8; stroke-width: 1.1; }
.frames path { fill: none; stroke: #777; stroke-width: .8; }
.swing path { fill: none; stroke: #3e3e40; stroke-width: .9; }
.leaf path { fill: none; stroke: #ee8a5b; stroke-width: 1; }
.leaf .sash { stroke-width: 1.8; }
.plan .tag text { fill: #e8703c; font: 500 6px var(--sans); }
.plan .tag .shutter { font: 6px var(--mono); }
.plan .rooms text { fill: #2765c4; font-size: 7px; font-weight: 500; }
.plan .rooms .area text { font-size: 5px; font-weight: 400; }
.plan .fix { font-size: 5px; fill: #2c8a4d; }
.plan .up { font-size: 7px; fill: #333; }
.bubbles circle { fill: #fff; stroke: #6d7176; stroke-width: .9; }
.plan .bubbles text { font-size: 8px; fill: #34373b; }
.solidmarks path { fill: #2f3338; }
.cut { fill: none; stroke: #26201b; stroke-width: 1.5; }
.plan .compass text { font-size: 5px; fill: #4b4e52; }
.leader { stroke: #3f8fe8; stroke-width: 1; stroke-dasharray: 2 2; }
.plan .pin { font-size: 8px; font-weight: 700; fill: #fff; }

.panel { display: flex; flex-direction: column; min-height: 0; border-left: 1px solid var(--line); }
.ptabs { height: 22px; flex: none; display: flex; border-bottom: 1px solid var(--line); padding-left: 3px; color: #a9a9ad; }
.ptabs button { width: 24px; justify-content: center; gap: 5px; }
.ptabs .on { width: 50px; background: var(--active); color: var(--strong); box-shadow: inset 0 -2px #1f73cf; }
.team-head { display: flex; align-items: center; justify-content: space-between; padding: 5px 7px 0 7px; }
.panel h2 { font-weight: 500; }
.panel .online-head { padding: 7px 7px 2px; }
.people { padding: 0 7px 7px; border-bottom: 1px solid var(--line); }
.people li { display: flex; align-items: center; gap: 6px; height: 26px; }
.people p { line-height: 13px; }
.people b, .entry header b { font-weight: 500; }
.people small { display: block; font-size: 7px; line-height: 10px; color: var(--muted); white-space: nowrap; }
.people p span, .entry header span { color: var(--muted); font-size: 8px; }
.panel em { font-size: 7px; line-height: 10px; border: 1px solid #47474b; border-radius: 2px; padding: 0 3px; margin-left: 2px; color: #c0c0c3; }
.panel em.client { border-style: dashed; }
.panel em.open { background: #18395e; border-color: #2b6cb4; color: var(--blue); font-size: 8px; margin-left: 0; }
.log-head { display: flex; align-items: center; justify-content: space-between; padding: 4px 7px; }
.log-head .seg button { padding: 0 6px; }
.log { flex: 1; min-height: 0; overflow: hidden; }
.day { background: #1c1c1f; font-size: 8px; line-height: 14px; padding: 1px 7px; color: #b3b3b7; }
.entry { display: grid; grid-template-columns: 30px minmax(0, 1fr); padding: 7px 7px 5px; border-bottom: 1px solid #343438; font-size: 8px; line-height: 13px; color: var(--strong); }
.entry.slim { padding-top: 4px; }
.entry.last { border: 0; padding-bottom: 0; }
.entry p { font-weight: 500; }
.entry .time { line-height: 13px; color: #c0c0c4; }
.entry header { display: flex; align-items: center; gap: 4px; height: 13px; font-size: 9px; margin-bottom: 2px; }
.entry header .avatar { color: var(--strong); font-size: 7px; }
.entry .ver { margin-left: auto; color: var(--muted); }
.entry .muted { margin-top: 4px; color: var(--muted); font-weight: 400; }
.entry blockquote { margin: 4px 0 0; padding-left: 6px; border-left: 1px solid #55555a; font-size: 9px; }
.entry .quiet { color: #b0b0b4; font-size: 8px; }
.entry .pending { display: flex; align-items: center; gap: 4px; color: var(--muted); font-weight: 400; }
.pending::before { content: ""; width: 6px; height: 6px; border-radius: 50%; background: #eeb04f; }
.entry nav { display: flex; gap: 7px; margin-top: 2px; }
.event { display: flex; align-items: center; gap: 5px; color: var(--muted); }
.layers { display: flex; align-items: center; gap: 5px; padding: 2px 7px; height: 18px; flex: none; border-top: 1px solid var(--line); color: var(--muted); }
.layers code { margin-left: auto; }

.status { height: 17px; flex: none; display: flex; background: var(--bar); font-size: 8px; }
.status > div { display: flex; align-items: center; gap: 4px; padding: 0 8px; border-right: 1px solid #343438; white-space: nowrap; }
.status code { color: var(--strong); }
.status code.blue { color: var(--blue); }
.status .ok { color: var(--green); }
.status > .pinned { padding: 0 6px; }
.status > .modes { padding: 0 7px 0 4px; }
.status > .sync { margin-left: auto; border-left: 1px solid #343438; }
.status > .langs { padding: 0 4px; border: 0; }
.status .seg { font-size: 7px; }
.status .seg button { height: 12px; gap: 3px; }

.mockup { align-self: flex-start; margin: 7px 0 5px 12px; height: 22px; display: flex; align-items: center; background: #1b1b1d; border: 1px solid #47474b; border-radius: 4px; padding-right: 14px; gap: 7px; font-size: 8px; }
.mockup strong { align-self: stretch; display: flex; align-items: center; padding: 0 6px 0 8px; background: #29292c; }
.mockup .seg button { padding: 0 6px; height: 15px; }
.mockup .seg .on { color: var(--blue); }
.mockup .state { font-size: 9px; }
```
